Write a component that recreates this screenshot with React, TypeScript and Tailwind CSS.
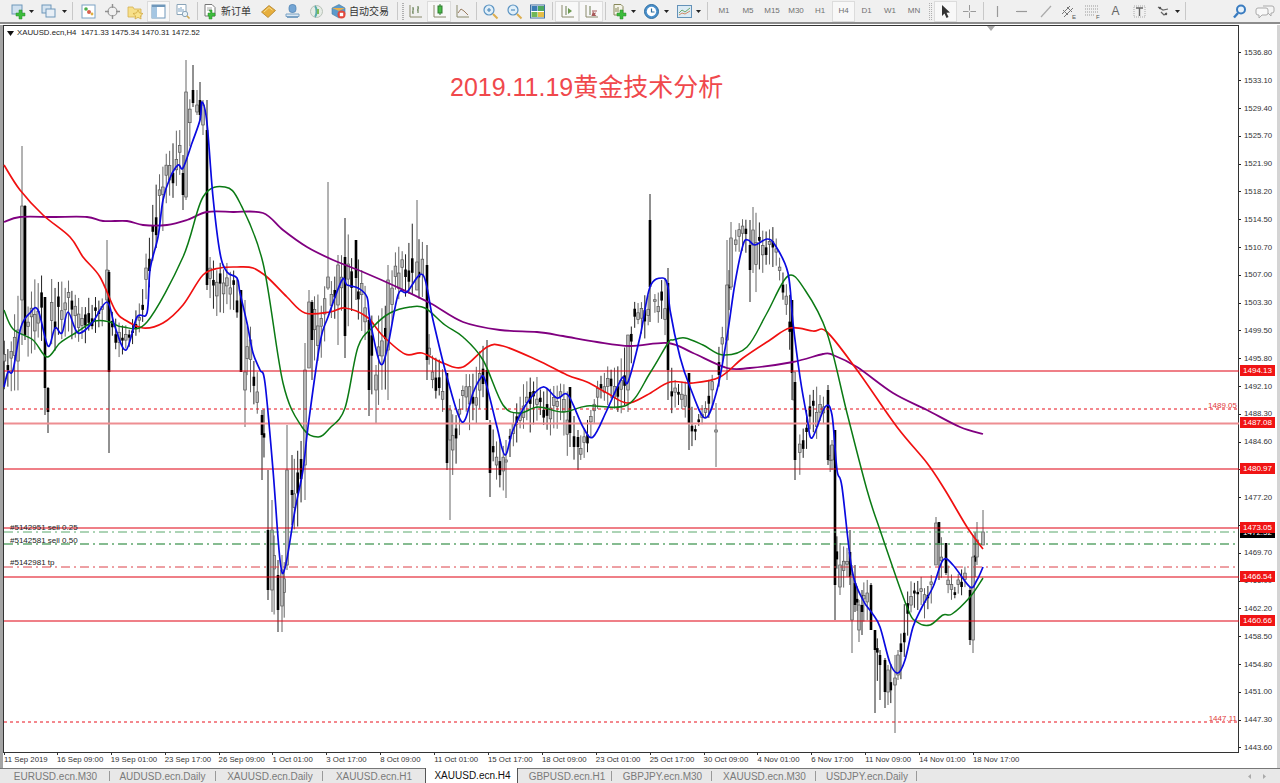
import React from "react";

type P = [number, number];
const smooth = (a: P[]) => {
  let d = `M${a[0][0]} ${a[0][1]}`;
  for (let i = 0; i < a.length - 1; i++) {
    const p0 = a[Math.max(0, i - 1)], p1 = a[i], p2 = a[i + 1], p3 = a[Math.min(a.length - 1, i + 2)];
    const c1x = p1[0] + (p2[0] - p0[0]) / 6, c1y = p1[1] + (p2[1] - p0[1]) / 6;
    const c2x = p2[0] - (p3[0] - p1[0]) / 6, c2y = p2[1] - (p3[1] - p1[1]) / 6;
    d += `C${c1x.toFixed(1)} ${c1y.toFixed(1)} ${c2x.toFixed(1)} ${c2y.toFixed(1)} ${p2[0]} ${p2[1]}`;
  }
  return d;
};

const blue: P[] = [[4,387],[8,372],[13,370],[21,327],[30,313],[38,310],[48,346],[55,328],[62,333],[68,312],[78,333],[92,323],[107,302],[115,327],[126,350],[137,317],[147,313],[150,270],[158,237],[163,200],[170,178],[178,165],[183,168],[192,143],[200,120],[202,102],[207,123],[213,197],[220,253],[227,272],[237,278],[240,293],[247,323],[253,353],[260,370],[265,383],[273,470],[280,560],[285,568],[295,510],[303,470],[308,427],[320,343],[328,317],[342,280],[347,285],[358,288],[367,297],[370,320],[380,363],[387,350],[398,295],[407,292],[423,275],[433,320],[447,377],[462,422],[473,393],[480,379],[485,380],[497,427],[505,455],[513,430],[527,403],[543,387],[557,398],[568,395],[583,427],[593,437],[607,410],[622,378],[628,382],[640,337],[650,287],[663,278],[668,287],[670,310],[680,357],[690,387],[705,418],[717,390],[727,337],[735,283],[743,245],[748,240],[755,245],[767,239],[775,245],[788,273],[793,323],[800,377],[807,417],[812,438],[825,407],[832,415],[837,470],[842,487],[852,570],[863,600],[872,613],[880,627],[890,663],[898,673],[905,660],[913,627],[922,607],[933,587],[943,560],[953,565],[970,587],[977,580],[983,567]];
const green: P[] = [[4,310],[13,329],[33,340],[47,357],[60,343],[77,332],[95,321],[110,322],[123,327],[147,322],[183,257],[203,197],[225,187],[240,203],[263,263],[283,383],[302,427],[318,437],[330,428],[345,408],[358,347],[373,327],[390,313],[410,307],[425,308],[445,325],[463,337],[483,360],[503,405],[520,413],[538,407],[563,412],[587,406],[627,405],[650,373],[668,343],[673,340],[685,338],[703,345],[723,355],[747,347],[767,313],[788,276],[805,290],[827,333],[847,413],[867,490],[880,530],[907,607],[917,622],[930,625],[943,615],[952,614],[970,597],[983,578]];
const red: P[] = [[4,165],[20,190],[43,215],[70,237],[83,257],[100,277],[115,310],[125,320],[143,328],[163,323],[183,305],[203,275],[220,268],[237,267],[253,268],[267,277],[287,297],[305,313],[330,312],[345,308],[367,317],[382,335],[405,354],[422,353],[443,363],[463,367],[487,347],[503,346],[537,360],[567,375],[587,382],[607,393],[627,403],[647,395],[670,382],[693,383],[720,377],[743,358],[770,340],[790,328],[813,331],[827,332],[857,370],[897,427],[927,463],[945,490],[967,527],[983,549]];
const purple: P[] = [[4,222],[20,217],[53,217],[87,217],[103,221],[127,221],[143,225],[167,225],[187,220],[207,212],[233,212],[263,213],[283,230],[307,247],[333,260],[363,272],[397,287],[430,303],[463,322],[500,330],[537,332],[563,336],[597,342],[630,346],[668,343],[693,353],[727,368],[750,368],[793,362],[823,354],[833,355],[857,367],[893,393],[927,410],[960,427],[983,434]];

const env: [number, number, number][] = [[0,345,405],[10,335,400],[20,280,395],[30,290,370],[40,260,350],[50,270,360],[60,265,345],[75,290,350],[85,300,345],[100,290,330],[110,305,340],[120,320,360],[130,325,350],[140,300,340],[147,245,310],[155,170,270],[165,145,225],[175,125,195],[185,100,195],[195,70,120],[205,100,140],[208,240,300],[215,255,320],[225,260,320],[235,270,310],[243,300,390],[250,320,400],[258,375,420],[265,400,480],[272,500,620],[280,560,610],[285,540,630],[290,430,560],[300,450,540],[305,370,470],[310,300,370],[320,290,370],[328,270,330],[335,270,330],[340,255,320],[345,230,330],[355,240,320],[365,270,340],[375,320,420],[385,300,400],[395,240,300],[405,250,300],[415,205,300],[425,245,310],[430,350,380],[435,345,400],[440,360,395],[447,380,470],[455,410,480],[460,395,430],[465,370,400],[470,370,450],[480,350,410],[487,340,420],[495,440,490],[505,430,498],[510,425,460],[515,400,450],[520,390,430],[530,360,440],[540,380,420],[550,380,440],[560,380,430],[570,385,470],[578,440,470],[590,410,450],[600,370,400],[610,360,410],[620,360,415],[628,335,410],[635,300,330],[645,290,340],[655,290,320],[660,280,330],[667,270,340],[672,370,420],[680,380,410],[690,375,450],[695,425,445],[700,405,425],[705,400,425],[710,370,420],[720,340,390],[727,290,340],[732,240,290],[737,220,250],[745,215,260],[755,208,300],[765,220,270],[775,220,270],[780,250,290],[785,280,310],[792,300,370],[800,430,480],[805,420,460],[810,385,440],[815,385,445],[822,385,420],[830,440,470],[838,545,590],[845,545,590],[850,550,575],[860,585,640],[868,575,630],[875,630,690],[885,655,705],[892,665,705],[898,655,690],[902,620,680],[907,575,650],[912,575,610],[920,575,610],[925,580,620],[930,575,610],[935,550,590],[938,520,570],[945,545,590],[950,570,600],[955,585,600],[960,565,600],[965,560,590],[970,575,600],[975,530,590],[983,510,545]];

// x, wickTop, wickBottom, bodyTop, bodyBottom, black
type C = [number, number, number, number, number, number];
const big: C[] = [[22,146,345,206,300,0],[25,205,340,206,335,1],[45,297,415,297,388,1],[48,387,433,388,412,1],[107,240,320,270,300,0],[109,270,453,272,372,1],[183,155,210,173,195,1],[186,60,200,92,197,0],[193,65,107,90,103,1],[197,90,115,105,112,0],[200,82,120,100,115,1],[203,100,135,105,125,0],[207,100,290,130,285,1],[241,290,372,290,372,1],[245,300,427,372,390,0],[262,410,480,415,435,1],[268,470,600,530,590,1],[272,500,612,530,590,0],[278,560,632,575,610,1],[282,555,632,570,606,0],[287,425,570,470,565,0],[292,455,525,490,495,1],[305,343,500,370,465,0],[309,290,368,302,368,0],[312,300,380,302,340,1],[328,182,290,277,288,0],[338,255,345,265,305,0],[345,218,358,257,336,1],[356,240,300,240,278,1],[369,317,416,320,390,1],[376,365,423,375,390,0],[388,265,400,280,350,0],[417,200,290,262,290,0],[427,245,380,265,360,1],[447,373,470,373,463,1],[450,405,520,410,440,0],[487,340,420,370,420,1],[490,420,497,425,473,1],[506,440,498,460,462,0],[570,387,447,387,433,1],[578,430,470,437,447,1],[628,335,412,335,390,0],[650,194,322,220,287,1],[668,268,400,283,370,1],[689,373,450,373,423,1],[716,403,467,430,432,0],[727,240,380,285,340,0],[731,222,290,238,287,0],[750,220,302,245,270,1],[753,207,273,230,245,0],[792,300,400,300,373,1],[794,372,400,372,400,0],[795,382,480,382,460,1],[828,385,465,390,460,1],[832,440,470,445,460,0],[835,430,620,430,585,1],[840,543,595,565,587,0],[850,530,585,552,577,1],[852,565,653,575,620,0],[855,565,612,583,605,1],[859,600,642,605,630,0],[862,590,635,605,612,1],[871,583,630,585,630,1],[875,630,713,630,650,1],[880,650,700,655,665,1],[885,658,708,660,692,1],[888,665,705,670,692,0],[895,655,733,678,685,0],[898,650,680,655,675,0],[936,517,565,523,565,0],[939,522,580,522,543,1],[946,543,575,543,573,1],[970,587,645,590,640,1],[973,535,653,557,640,0],[977,522,565,540,557,0],[983,510,545,532,545,0]];

function buildCandles(): C[] {
  let s = 1337;
  const r = () => {
    s = (s * 16807) % 2147483647;
    return s / 2147483647;
  };
  const out: C[] = [];
  for (let i = 0; i < 290; i++) {
    const x = 4.5 + i * 3.37;
    const n1 = r(), n2 = r(), n3 = r(), n4 = r(), n5 = r();
    if (big.some((b) => Math.abs(b[0] - x) < 1.7)) continue;
    let k = 0;
    while (k < env.length - 2 && env[k + 1][0] < x) k++;
    const a = env[k], b = env[k + 1];
    const t = Math.min(1, Math.max(0, (x - a[0]) / (b[0] - a[0])));
    const top = a[1] + (b[1] - a[1]) * t;
    const bot = a[2] + (b[2] - a[2]) * t;
    const h = bot - top;
    const wt = top + n1 * h * 0.25;
    const wb = bot - n2 * h * 0.25;
    const bt = wt + (0.2 + n3 * 0.35) * (wb - wt);
    const bb = Math.min(wb, bt + (0.08 + n4 * 0.25) * (wb - wt));
    out.push([x, wt, wb, bt, bb, n5 > 0.5 ? 1 : 0]);
  }
  return out.concat(big);
}
const candles = buildCandles();

const prices = ["1536.80","1533.10","1529.40","1525.70","1521.90","1518.20","1514.50","1510.70","1507.00","1503.30","1499.50","1495.80","1492.10","1488.30","1484.60","1480.90","1477.20","1473.40","1469.70","1466.00","1462.20","1458.50","1454.80","1451.00","1447.30","1443.60"];
const times = ["11 Sep 2019","16 Sep 09:00","19 Sep 01:00","23 Sep 17:00","26 Sep 09:00","1 Oct 01:00","3 Oct 17:00","8 Oct 09:00","11 Oct 01:00","15 Oct 17:00","18 Oct 09:00","23 Oct 01:00","25 Oct 17:00","30 Oct 09:00","4 Nov 01:00","6 Nov 17:00","11 Nov 09:00","14 Nov 01:00","18 Nov 17:00"];

const B = ({ c, active, children }: { c: string; active?: boolean; children?: React.ReactNode }) => (
  <div className={`flex h-[21px] shrink-0 items-center justify-center ${active ? "border border-[#dcdcdc] bg-[#f8f8f8]" : ""} ${c}`}>{children}</div>
);
const Arrow = ({ c }: { c: string }) => (
  <div className={`flex h-[21px] shrink-0 items-center justify-center ${c}`}>
    <svg width="5" height="3" viewBox="0 0 5 3"><path d="M0 0h5L2.500 3z" fill="#222" /></svg>
  </div>
);
const Sep = ({ c }: { c: string }) => (
  <div className={`flex h-[21px] shrink-0 items-center justify-center ${c}`}><div className="h-[18px] w-px bg-[#c8c8c8]" /></div>
);
const Handle = ({ c }: { c: string }) => (
  <div className={`flex h-[21px] shrink-0 items-center justify-center ${c}`}><div className="h-[17px] w-[3px] border-x border-dotted border-[#b0b0b0]" /></div>
);
const I = ({ children }: { children: React.ReactNode }) => (
  <svg width="17" height="17" viewBox="0 0 17 17" fill="none">{children}</svg>
);
const Plus = ({ x = 0, y = 0 }: { x?: number; y?: number }) => (
  <path d={`M${x + 9} ${y + 7}h3v3h3v3h-3v3h-3v-3H6v-3h3z`} fill="#3cbc3c" stroke="#2a8a2a" strokeWidth=".5" />
);
const TF = ({ c, active, t }: { c: string; active?: boolean; t: string }) => (
  <B c={c} active={active}><span className="text-[8px] text-[#707070]">{t}</span></B>
);
const Tab = ({ c, t }: { c: string; t: string }) => (
  <div className={`flex shrink-0 items-center justify-center ${c}`}>
    <span className="text-[10px] text-[#7a7a7a]">{t}</span>
  </div>
);

const tags = [
  { t: "1494.13", c: "top-[340px]" },
  { t: "1487.08", c: "top-[392px]" },
  { t: "1480.97", c: "top-[438px]" },
  { t: "1466.54", c: "top-[546px]" },
  { t: "1460.66", c: "top-[590px]" },
];

export default function App() {
  return (
    <div className="flex h-[783px] w-[1280px] flex-col overflow-hidden bg-white font-['Liberation_Sans','Noto_Sans_CJK_SC',sans-serif]">
      {/* toolbar */}
      <div className="flex h-[22px] shrink-0 items-center bg-[#f0f0f0]">
        <B c="w-[20px] ml-[8px]"><I><rect x="2" y="2" width="10" height="9" fill="#cfe0ef" stroke="#6f97ba" /><Plus /></I></B>
        <Arrow c="w-[7px]" />
        <B c="w-[20px] ml-[3px]"><I><rect x="2" y="2" width="9" height="8" fill="#d6e4f0" stroke="#6f97ba" /><rect x="6" y="6" width="9" height="8" fill="#e8eff6" stroke="#6f97ba" /></I></B>
        <Arrow c="w-[8px] ml-[2px]" />
        <Sep c="w-[8px]" />
        <B c="w-[24px]"><I><rect x="2" y="2" width="13" height="13" fill="#fff" stroke="#7ba2c4" /><circle cx="6" cy="6" r="1.800" fill="#4caf4c" /><circle cx="9" cy="9" r="2" fill="#d9604f" /><circle cx="12" cy="11" r="1.400" fill="#e0b040" /></I></B>
        <B c="w-[24px]"><I><circle cx="8.500" cy="8.500" r="4.500" stroke="#999" strokeWidth="1.200" /><path d="M8.500 1v4M8.500 12v4M1 8.500h4M12 8.500h4" stroke="#909090" strokeWidth="1.400" /></I></B>
        <B c="w-[23px]"><I><path d="M1 4h5l1 2h7v8H1z" fill="#f7e08a" stroke="#d4b050" strokeWidth=".8" /><path d="M11 7l1.500 3 3.500.5-2.500 2.300.6 3.200-3.100-1.600L8 16l.6-3.200L6 10.500l3.500-.5z" fill="#f9e38c" stroke="#cfa53c" strokeWidth=".7" /></I></B>
        <B c="w-[23px]" active><I><rect x="2" y="2" width="13" height="13" fill="#fff" stroke="#6f97ba" /><rect x="2" y="2" width="5" height="13" fill="#a5c6e2" /><rect x="2" y="2" width="13" height="2" fill="#6f97ba" /></I></B>
        <B c="w-[24px]"><I><path d="M3 1.500h9v10H3z" fill="#fff" stroke="#8aa4b8" /><path d="M5 9V5M7 9V4M9 9V6" stroke="#7ba2c4" /><circle cx="11" cy="11" r="2.700" fill="#e9f2f8" stroke="#8aa4b8" /><path d="M13 13l2.500 2.500" stroke="#d0a850" strokeWidth="1.600" /></I></B>
        <Sep c="w-[6px]" />
        <B c="w-[55px] justify-start">
          <span className="flex w-[21px] justify-center"><I><path d="M3 1.500h7l3 3V13H3z" fill="#fff" stroke="#777" /><path d="M5 5h5M5 7h5" stroke="#aaa" /><Plus x={-2} /></I></span>
          <span className="text-[10px] text-[#333]">新订单</span>
        </B>
        <B c="w-[24px] ml-[1px]"><I><path d="M1.500 9L9 2.500l6.500 5L8 14.500z" fill="#e6ae3c" stroke="#b08028" strokeWidth=".8" /><path d="M4 9l5-4.500 3.500 2.700" stroke="#f6dc8a" /></I></B>
        <B c="w-[24px]"><I><rect x="5" y="1.500" width="7" height="8" rx="3" fill="#74a5d4" stroke="#4a7fb0" strokeWidth=".7" /><path d="M2 11h13v2.500H2z" fill="#dbe8f3" stroke="#7ba2c4" /><path d="M3 14.500h11" stroke="#7ba2c4" /></I></B>
        <B c="w-[24px]"><I><circle cx="8.500" cy="8.500" r="6" fill="#e6ece6" stroke="#b8c2b8" /><path d="M7 3c2 2 2 9 0 11" stroke="#5aaca8" strokeWidth="2" /><path d="M10 6v5" stroke="#7cbc58" strokeWidth="2" /></I></B>
        <B c="w-[64px] justify-start">
          <span className="flex w-[21px] justify-center"><I><path d="M2 5l7-3.500L15 5v6l-6 4-7-4z" fill="#5c9acb" stroke="#3f7aa5" strokeWidth=".6" /><path d="M2 5l7 3 6-3" fill="#e8b04c" /><circle cx="11.500" cy="11.500" r="4" fill="#e2483c" /><rect x="9.800" y="9.800" width="3.400" height="3.400" fill="#fff" /></I></span>
          <span className="text-[10px] text-[#333]">自动交易</span>
        </B>
        <Sep c="w-[10px]" />
        <Handle c="w-[1px]" />
        <B c="w-[24px]"><I><path d="M3 2v12h12" stroke="#8a8a6c" /><path d="M6 4v7M5 9h1M6 6h1M11 3v7M10 7h1M11 5h1" stroke="#668054" strokeWidth="1.100" /></I></B>
        <B c="w-[24px]" active><I><path d="M3 2v12h12" stroke="#8a8a6c" /><rect x="7" y="3" width="4" height="7" fill="#48bc48" stroke="#2f7a2f" /><path d="M9 1v2M9 10v2" stroke="#2f7a2f" /></I></B>
        <B c="w-[23px]"><I><path d="M3 2v12h12" stroke="#8a8a6c" /><path d="M4 10l3-4 3 2 4 4" stroke="#9a7c60" /></I></B>
        <Sep c="w-[4px]" />
        <B c="w-[24px]"><I><circle cx="7" cy="7" r="5" fill="#e0eff9" stroke="#5a93c2" strokeWidth="1.200" /><path d="M5 7h4M7 5v4" stroke="#4a86b8" strokeWidth="1.100" /><path d="M11 11l4.500 4.500" stroke="#dcae50" strokeWidth="2" /></I></B>
        <B c="w-[24px]"><I><circle cx="7" cy="7" r="5" fill="#e0eff9" stroke="#5a93c2" strokeWidth="1.200" /><path d="M5 7h4" stroke="#4a86b8" strokeWidth="1.100" /><path d="M11 11l4.500 4.500" stroke="#dcae50" strokeWidth="2" /></I></B>
        <B c="w-[23px]"><I><rect x="1.500" y="2" width="14" height="13" fill="#fff" stroke="#3f6f9f" /><rect x="2.500" y="3" width="6" height="5" fill="#3b7cb4" /><rect x="9" y="3" width="6" height="5" fill="#4ea860" /><rect x="2.500" y="9" width="6" height="5" fill="#70b858" /><rect x="9" y="9" width="6" height="5" fill="#e4be48" /></I></B>
        <Sep c="w-[6px]" />
        <B c="w-[24px]" active><I><path d="M3 2v12h12" stroke="#8a8a6c" /><path d="M7 3v9" stroke="#6c7d50" /><path d="M9 5l4 3-4 3z" fill="#6c9a50" /></I></B>
        <B c="w-[24px]" active><I><path d="M3 2v12h12" stroke="#8a8a6c" /><path d="M7 3v9" stroke="#6c7d50" /><path d="M10 8l1 2 2-.5-1 2 1.500 1.500h-5" fill="#a85a5a" /><path d="M9 8h5" stroke="#a85a5a" /></I></B>
        <Sep c="w-[5px]" />
        <B c="w-[22px]"><I><path d="M3 1.500h7l2 2V12H3z" fill="#f4f4e8" stroke="#88885a" /><path d="M5 5v4M7 4v5" stroke="#88885a" /><Plus /></I></B>
        <Arrow c="w-[7px]" />
        <B c="w-[22px] ml-[3px]"><I><circle cx="8.500" cy="8.500" r="7" fill="#4a90cc" stroke="#2f6e9f" /><circle cx="8.500" cy="8.500" r="4.700" fill="#fff" /><path d="M8.500 5.500v3.500h3" stroke="#2f6e9f" strokeWidth="1.200" /></I></B>
        <Arrow c="w-[8px]" />
        <B c="w-[22px] ml-[3px]"><I><rect x="1.500" y="2.500" width="14" height="12" fill="#dcebf5" stroke="#6492b8" /><path d="M3 10l3-3 3 2 5-4" stroke="#6caa6c" /><path d="M3 12l3-2 3 1 5-3" stroke="#d08c64" /></I></B>
        <Arrow c="w-[7px]" />
        <Sep c="w-[10px]" />
        <TF c="w-[24px]" t="M1" />
        <TF c="w-[24px]" t="M5" />
        <TF c="w-[24px]" t="M15" />
        <TF c="w-[24px]" t="M30" />
        <TF c="w-[24px]" t="H1" />
        <TF c="w-[23px]" active t="H4" />
        <TF c="w-[23px]" t="D1" />
        <TF c="w-[24px]" t="W1" />
        <TF c="w-[24px]" t="MN" />
        <Handle c="w-[8px]" />
        <B c="w-[23px]" active><I><path d="M5 2l8 7.500-3.500.2 2 4.300-2 1-2-4.400L5 13z" fill="#333" /></I></B>
        <B c="w-[24px]"><I><path d="M8.500 2v13M2 8.500h13" stroke="#999" /><circle cx="8.500" cy="8.500" r="1" fill="#f0f0f0" /></I></B>
        <Sep c="w-[4px]" />
        <B c="w-[24px]"><I><path d="M8.500 3v11" stroke="#999" strokeWidth="1.200" /></I></B>
        <B c="w-[24px]"><I><path d="M3 8.500h11" stroke="#999" strokeWidth="1.200" /></I></B>
        <B c="w-[24px]"><I><path d="M4 14L14 3" stroke="#aaa" strokeWidth="1.200" /></I></B>
        <B c="w-[23px]"><I><path d="M2 11l8-8M4 14l9-9M3 7l5 5M7 4l5 5" stroke="#777" /><text x="12" y="16" fontSize="6" fill="#555">E</text></I></B>
        <B c="w-[24px]"><I><path d="M1 3h13M1 6h13M1 9h13M1 12h10" stroke="#999" strokeDasharray="1 1" /><text x="12" y="16" fontSize="6" fill="#555">F</text></I></B>
        <B c="w-[23px]"><span className="text-[12px] text-[#666]">A</span></B>
        <B c="w-[25px]"><I><path d="M3 3h11v11H3z" stroke="#aaa" strokeDasharray="1 1" /><path d="M5 5h7M8.500 5v8" stroke="#666" strokeWidth="1.400" /></I></B>
        <B c="w-[22px]"><I><path d="M3 4l5 3 5-1M6 9l3 3 3-2" stroke="#666" strokeWidth="1.200" /><circle cx="5" cy="5" r="1.200" fill="#555" /><circle cx="11" cy="11" r="1.200" fill="#555" /></I></B>
        <Arrow c="w-[7px]" />
        <Sep c="w-[8px]" />
        <B c="w-[24px] ml-auto"><I><circle cx="10" cy="6.500" r="4" fill="#e6f1fa" stroke="#3a7cc0" strokeWidth="2" /><path d="M7 10l-4 4.500" stroke="#3a7cc0" strokeWidth="2.400" /></I></B>
        <B c="w-[26px] mr-[2px] ml-[1px]"><svg width="20" height="16" viewBox="0 0 20 16" fill="none"><path d="M8 3h9a2 2 0 0 1 2 2v3a2 2 0 0 1-2 2h-1v3l-3-3H9" fill="#f4f4f4" stroke="#aaa" /><path d="M3 5h8a2 2 0 0 1 2 2v3a2 2 0 0 1-2 2H7l-3 3v-3H3a2 2 0 0 1-2-2V7a2 2 0 0 1 2-2z" fill="#f8f8f8" stroke="#aaa" /></svg></B>
      </div>
      <div className="h-[3px] shrink-0 border-t-2 border-[#8c8c8c] bg-white" />

      {/* chart area */}
      <div className="flex min-h-0 flex-1">
        <div className="w-[3px] shrink-0 bg-[#a4a4a4]" />
        <div className="flex min-w-0 flex-1 flex-col">
          <div className="relative flex h-[728px] shrink-0">
            {/* plot */}
            <div className="relative h-[728px] w-[1236px] shrink-0 border border-[#333] bg-white">
              <svg className="absolute -left-px -top-px blur-[0.3px]" width="1236" height="728" viewBox="3 25 1236 728" fill="none">
                {candles.map((c, i) => (
                  <g key={i}>
                    <line x1={c[0]} x2={c[0]} y1={c[1]} y2={c[2]} stroke={c[5] ? "#222" : "#666"} strokeWidth="1" />
                    <rect x={c[0] - 1.3} y={c[3]} width="2.600" height={Math.max(1, c[4] - c[3])} fill={c[5] ? "#000" : "#bbb"} stroke={c[5] ? "#000" : "#555"} strokeWidth={c[5] ? 0 : 0.7} />
                  </g>
                ))}
                <path d="M4 371H1239M4 469H1239M4 528H1239M4 577H1239M4 621H1239" stroke="#e00010" strokeWidth="1.150" />
                <path d="M4 423.500H1239" stroke="#ee8e92" strokeWidth="2" />
                <path d="M4 409H1239M4 722H1239" stroke="#e8101c" strokeWidth="1" strokeDasharray="3 3" />
                <path d="M4 532H1239" stroke="#5aa86c" strokeWidth="1" strokeDasharray="9 4 2 4" />
                <path d="M4 544H1239" stroke="#0f7a24" strokeWidth="1.100" strokeDasharray="9 4 2 4" />
                <path d="M4 567H1239" stroke="#dc4048" strokeWidth="1" strokeDasharray="9 4 2 4" />
                <path d={smooth(purple)} stroke="#800080" strokeWidth="1.800" />
                <path d={smooth(red)} stroke="#f01010" strokeWidth="1.700" />
                <path d={smooth(green)} stroke="#0b7a14" strokeWidth="1.500" />
                <path d={smooth(blue)} stroke="#0a0ae0" strokeWidth="1.700" />
              </svg>
              <div className="absolute left-[2px] top-[2px] flex items-center gap-[3px] text-[7.8px] leading-[10px] text-[#222]">
                <svg width="7" height="5" viewBox="0 0 7 5" className="ml-[1px]"><path d="M0 0h7L3.500 5z" fill="#111" /></svg>
                <span className="whitespace-pre">XAUUSD.ecn,H4  1471.33 1475.34 1470.31 1472.52</span>
              </div>
              <svg className="absolute left-[983px] top-0" width="8" height="5" viewBox="0 0 8 5"><path d="M0 0h8L4 5z" fill="#a8a8a8" /></svg>
              <div className="absolute left-[446px] top-[43px] text-[25px] leading-[36px] text-[#f0484c]">2019.11.19黄金技术分析</div>
              <div className="absolute left-[6px] top-[497px] text-[8px] leading-[10px] text-[#222]">#5142951 sell 0.25</div>
              <div className="absolute left-[6px] top-[510px] text-[8px] leading-[10px] text-[#222]">#5142581 sell 0.50</div>
              <div className="absolute left-[6px] top-[532px] text-[8px] leading-[10px] text-[#222]">#5142981 tp</div>
              <div className="absolute right-[1px] top-[375px] text-[8px] leading-[10px] text-[#e03a3a]">1489.05</div>
              <div className="absolute right-[1px] top-[688px] text-[8px] leading-[10px] text-[#e03a3a]">1447.11</div>
            </div>
            {/* price scale */}
            <div className="relative flex-1 pt-[14px]">
              {prices.map((p) => (
                <div key={p} className="flex h-[27.8px] items-center gap-[3px]">
                  <div className="h-px w-[2px] bg-[#222]" />
                  <span className="text-[7.8px] text-[#333]">{p}</span>
                </div>
              ))}
              {tags.map((t) => (
                <div key={t.t} className={`absolute left-[1px] flex h-[11px] w-[35px] items-center justify-center bg-[#f01414] text-[8px] text-white ${t.c}`}>{t.t}</div>
              ))}
              <div className="absolute left-[1px] top-[503px] flex h-[10px] w-[35px] items-center justify-center bg-black text-[8px] text-white">1472.52</div>
              <div className="absolute left-[1px] top-[497px] flex h-[11px] w-[35px] items-center justify-center bg-[#f01414] text-[8px] text-white">1473.05</div>
            </div>
          </div>
          {/* time scale */}
          <div className="flex h-[15px] shrink-0">
            {times.map((t, i) => (
              <div key={t} className={`flex w-[53.9px] shrink-0 flex-col ${i === 0 ? "pl-[1px]" : ""}`}>
                <div className="h-[2px] w-px bg-[#333]" />
                <span className="whitespace-nowrap text-[7.8px] leading-[10px] text-[#333]">{t}</span>
              </div>
            ))}
          </div>
        </div>
        <div className="w-[3px] shrink-0 bg-[#d4d4d4]" />
      </div>

      {/* tabs */}
      <div className="flex h-[15px] shrink-0 items-stretch border-t border-[#777] bg-[#e8e8e8]">
        <Tab c="w-[110px] border-r border-[#999] my-[2px] pl-[2px]" t="EURUSD.ecn.M30" />
        <Tab c="w-[106px] border-r border-[#999] my-[2px]" t="AUDUSD.ecn.Daily" />
        <Tab c="w-[107px] border-r border-[#999] my-[2px] pl-[2px]" t="XAUUSD.ecn.Daily" />
        <Tab c="w-[102px] my-[2px]" t="XAUUSD.ecn.H1" />
        <div className="-mt-px flex w-[93px] shrink-0 items-center justify-center border-x border-[#555] bg-white pl-[2px]">
          <span className="text-[10px] text-[#111]">XAUUSD.ecn.H4</span>
        </div>
        <Tab c="w-[94px] border-r border-[#999] my-[2px] pl-[5px]" t="GBPUSD.ecn.H1" />
        <Tab c="w-[100px] border-r border-[#999] my-[2px] pl-[2px]" t="GBPJPY.ecn.M30" />
        <Tab c="w-[104px] border-r border-[#999] my-[2px] pl-[2px]" t="XAUUSD.ecn.M30" />
        <Tab c="w-[101px] border-r border-[#999] my-[2px] pl-[2px]" t="USDJPY.ecn.Daily" />
        <div className="ml-auto mr-[14px] flex items-center gap-[12px]">
          <svg width="3" height="5" viewBox="0 0 3 5"><path d="M3 0v5L0 2.500z" fill="#aaa" /></svg>
          <svg width="3" height="5" viewBox="0 0 3 5"><path d="M0 0v5l3-2.500z" fill="#aaa" /></svg>
        </div>
      </div>
    </div>
  );
}
